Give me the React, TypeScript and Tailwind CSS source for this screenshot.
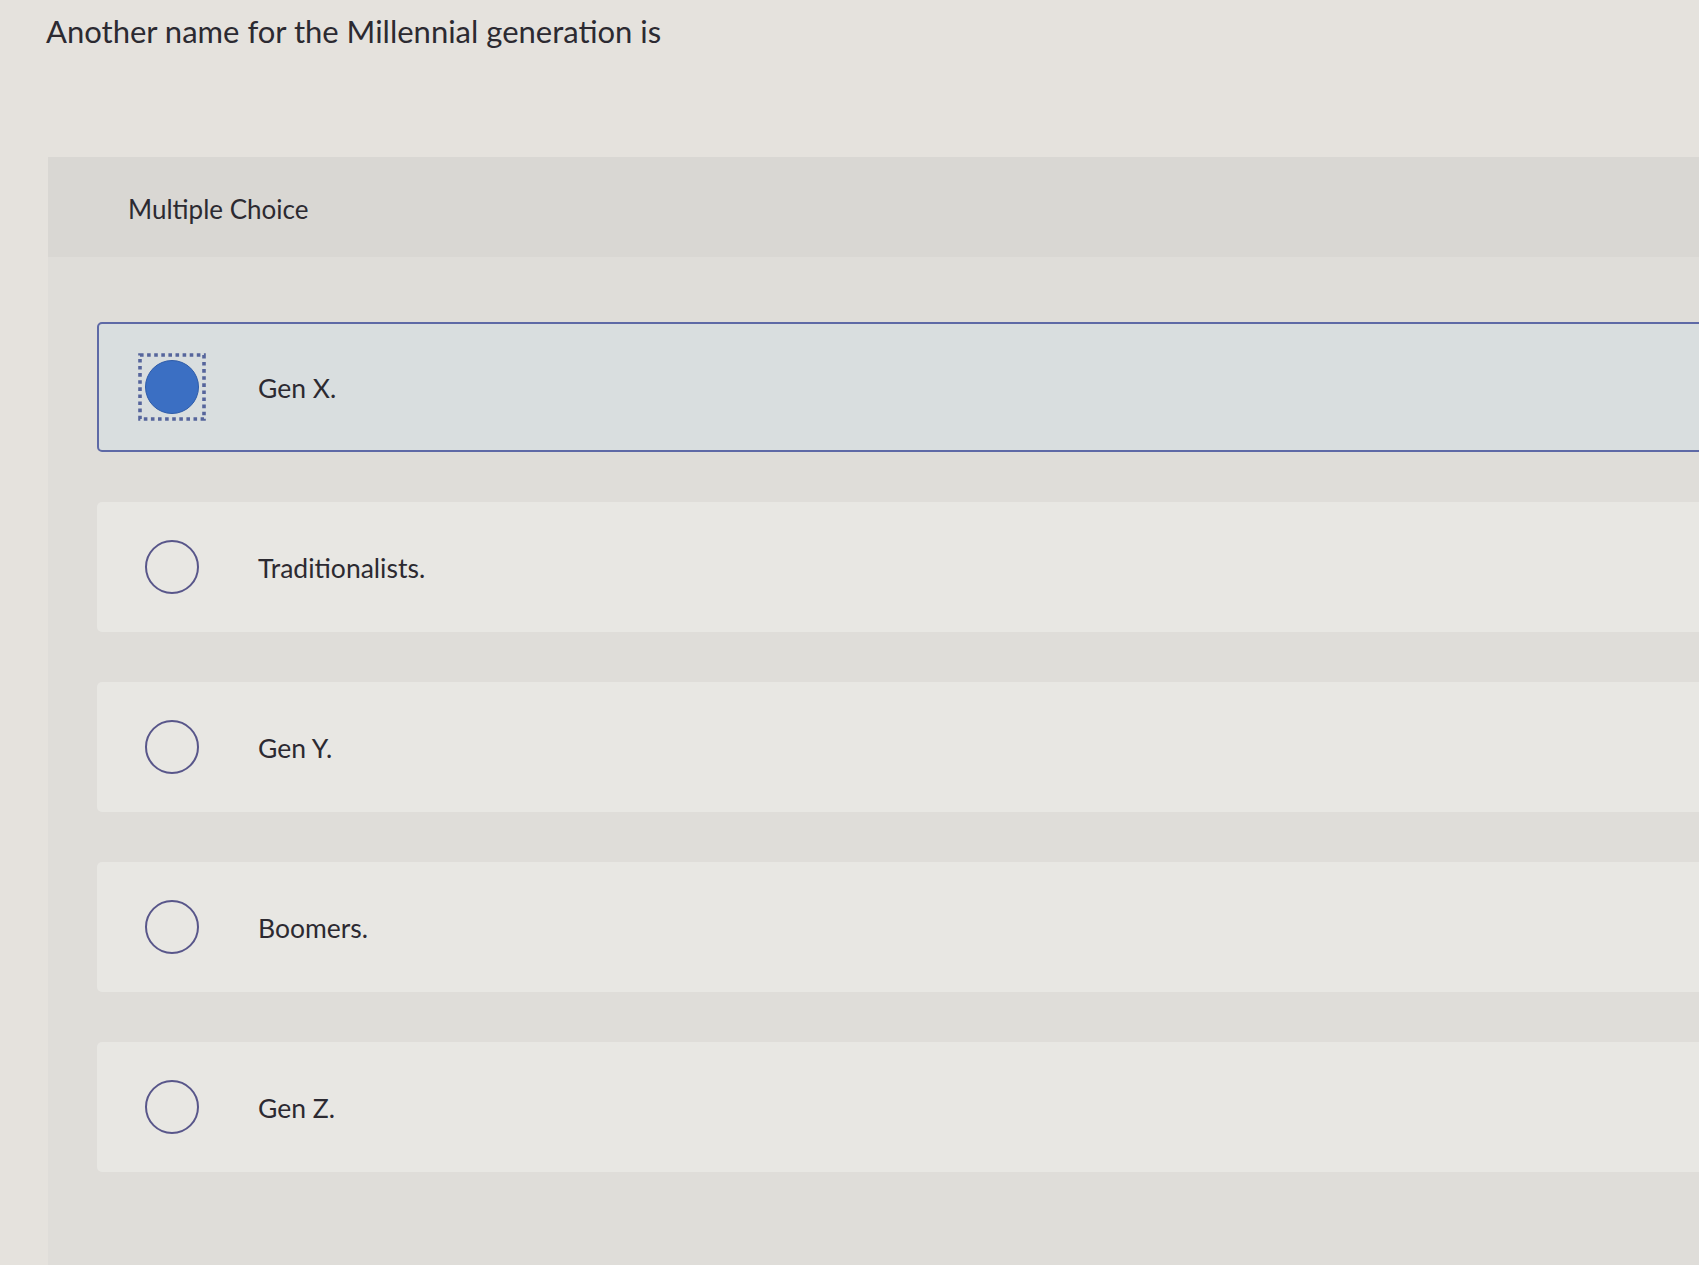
import React from "react";

const options = [
  { label: "Gen X.", selected: true },
  { label: "Traditionalists.", selected: false },
  { label: "Gen Y.", selected: false },
  { label: "Boomers.", selected: false },
  { label: "Gen Z.", selected: false },
];

function Radio({ selected }: { selected: boolean }) {
  if (selected) {
    return (
      <div className="relative w-[54px] h-[54px] shrink-0">
        <svg
          className="absolute left-[-7px] top-[-7px]"
          width="68"
          height="68"
          viewBox="0 0 68 68"
        >
          <rect
            x="2"
            y="2"
            width="64"
            height="64"
            fill="none"
            stroke="#56659c"
            strokeWidth="3.6"
            strokeDasharray="3.6 3.5"
          />
        </svg>
        <div className="w-[54px] h-[54px] rounded-full bg-[#3b6fc3] border border-[#2f5ca9]" />
      </div>
    );
  }
  return (
    <div className="w-[54px] h-[54px] shrink-0 rounded-full border-2 border-[#58568a]" />
  );
}

export default function App() {
  return (
    <div className="w-[1699px] h-[1265px] overflow-hidden bg-[#e5e2dd] font-['Lato','Noto_Sans',sans-serif] text-[#2c2a31]">
      <div className="h-[157px] pl-[46px] pt-[11px]">
        <h1 className="text-[31px] leading-[40px] font-normal">
          Another name for the Millennial generation is
        </h1>
      </div>
      <div className="ml-[48px] mr-[-20px] h-[1108px] bg-[#dfddd9]">
        <div className="h-[100px] bg-[#d9d7d3] pl-[80px] pt-[36px]">
          <div className="text-[26px] leading-[32px]">Multiple Choice</div>
        </div>
        <div className="pl-[49px] pt-[65px] flex flex-col gap-[50px]">
          {options.map((o) => (
            <div
              key={o.label}
              className={
                o.selected
                  ? "h-[130px] rounded-[5px] border-2 border-[#5e69a6] bg-[#d9dedf] flex items-center pl-[46px]"
                  : "h-[130px] rounded-[5px] border-2 border-transparent bg-[#e8e7e3] flex items-center pl-[46px]"
              }
            >
              <Radio selected={o.selected} />
              <span className="ml-[59px] text-[26.5px] leading-[32px] pt-[2px]">
                {o.label}
              </span>
            </div>
          ))}
        </div>
      </div>
    </div>
  );
}
